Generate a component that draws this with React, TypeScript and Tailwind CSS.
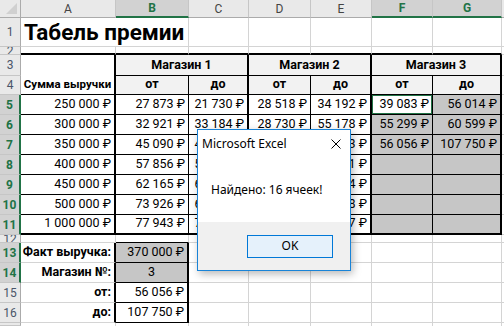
import clsx from "clsx";
import { ReactNode } from "react";

// border styles for a cell edge: g = grid line, k = thin black, K = thick black, n = none
type Edge = "g" | "k" | "K" | "n";

const RIGHT: Record<Edge, string> = {
  g: "border-r border-r-[#d4d4d4]",
  k: "border-r border-r-black",
  K: "border-r-2 border-r-black",
  n: "",
};

const BOTTOM: Record<Edge, string> = {
  g: "border-b border-b-[#d4d4d4]",
  k: "border-b border-b-black",
  K: "border-b-2 border-b-black",
  n: "",
};

type CellProps = {
  children?: ReactNode;
  r?: Edge;
  b?: Edge;
  align?: "left" | "right" | "center";
  className?: string;
};

const Cell = ({ children, r = "g", b = "g", align = "right", className }: CellProps) => (
  <div
    className={clsx(
      "flex items-end overflow-hidden whitespace-nowrap pb-[2px] leading-[16px]",
      RIGHT[r],
      BOTTOM[b],
      align === "right" && "justify-end pr-[3px]",
      align === "center" && "justify-center",
      align === "left" && "justify-start pl-[3px]",
      className
    )}
  >
    {children}
  </div>
);

const ColHead = ({ label, on }: { label?: string; on?: boolean }) => (
  <div
    className={clsx(
      "flex items-center justify-center border-r border-r-[#c6c6c6] text-[12px]",
      on
        ? "bg-[#d2d2d2] border-b-2 border-b-[#217346] font-bold text-[#217346]"
        : "bg-[#e9e9e9] border-b border-b-[#ababab] text-[#444]"
    )}
  >
    {label}
  </div>
);

const RowHead = ({ n, on }: { n?: number; on?: boolean }) => (
  <div
    className={clsx(
      "flex items-center justify-center overflow-hidden border-b border-b-[#c6c6c6] text-[12px] leading-none",
      on
        ? "bg-[#d2d2d2] border-r-2 border-r-[#217346] font-bold text-[#217346]"
        : "bg-[#e9e9e9] border-r border-r-[#ababab] text-[#4a5568]"
    )}
  >
    {n}
  </div>
);

const ROWS = [
  { sum: "250 000 ₽", v: ["27 873 ₽", "21 730 ₽", "28 518 ₽", "34 192 ₽", "39 083 ₽", "56 014 ₽"] },
  { sum: "300 000 ₽", v: ["32 921 ₽", "33 184 ₽", "28 730 ₽", "55 178 ₽", "55 299 ₽", "60 599 ₽"] },
  { sum: "350 000 ₽", v: ["45 090 ₽", "48 211 ₽", "52 417 ₽", "60 553 ₽", "56 056 ₽", "107 750 ₽"] },
  { sum: "400 000 ₽", v: ["57 856 ₽", "59 342 ₽", "61 205 ₽", "63 871 ₽", "", ""] },
  { sum: "450 000 ₽", v: ["62 165 ₽", "66 118 ₽", "68 940 ₽", "70 214 ₽", "", ""] },
  { sum: "500 000 ₽", v: ["73 926 ₽", "69 805 ₽", "74 332 ₽", "81 098 ₽", "", ""] },
  { sum: "1 000 000 ₽", v: ["77 943 ₽", "78 536 ₽", "85 120 ₽", "89 417 ₽", "", ""] },
];

const TOTALS = [
  { label: "Факт выручка:", value: "370 000 ₽", on: true, center: false },
  { label: "Магазин №:", value: "3", on: true, center: true },
  { label: "от:", value: "56 056 ₽", on: false, center: false },
  { label: "до:", value: "107 750 ₽", on: false, center: false },
];

const STORES = ["Магазин 1", "Магазин 2", "Магазин 3"];

export default function App() {
  return (
    <div className="relative h-[326px] w-[504px] overflow-hidden bg-white font-['Roboto',sans-serif] text-[12.5px] text-black">
      <div className="grid h-full grid-cols-[21px_95px_73px_60px_62px_61px_61px_69px_1fr] grid-rows-[18px_29px_8px_21px_19px_repeat(7,20px)_8px_repeat(4,20px)_1fr]">
        {/* column headers */}
        <div className="relative border-b border-r border-b-[#ababab] border-r-[#ababab] bg-[#e9e9e9]">
          <svg className="absolute bottom-[3px] right-[3px]" width="11" height="11" viewBox="0 0 11 11">
            <polygon points="11,0 11,11 0,11" fill="#d0d0d0" />
          </svg>
        </div>
        <ColHead label="A" />
        <ColHead label="B" on />
        <ColHead label="C" />
        <ColHead label="D" />
        <ColHead label="E" />
        <ColHead label="F" on />
        <ColHead label="G" on />
        <ColHead />

        {/* row 1: title */}
        <RowHead n={1} />
        <div className="flex items-end overflow-visible whitespace-nowrap border-b border-b-[#d4d4d4] pb-[1px] pl-[3px] text-[22.5px] font-bold leading-[26px]">
          Табель премии
        </div>
        <Cell />
        <Cell />
        <Cell />
        <Cell />
        <Cell />
        <Cell />
        <Cell r="n" />

        {/* row 2 */}
        <RowHead n={2} />
        <Cell b="K" />
        <Cell b="K" />
        <Cell b="K" />
        <Cell b="K" />
        <Cell b="K" />
        <Cell b="K" />
        <Cell b="K" />
        <Cell r="n" />

        {/* row 3: store captions */}
        <RowHead n={3} />
        <Cell r="K" b="n" />
        {STORES.map((s) => (
          <Cell key={s} r="K" b="k" align="center" className="col-span-2 items-center bg-[#f2f2f2] pb-0 font-bold">
            {s}
          </Cell>
        ))}
        <Cell r="n" />

        {/* row 4: column captions */}
        <RowHead n={4} />
        <Cell r="K" b="k" align="center" className="text-[11.5px] font-bold">
          Сумма выручки
        </Cell>
        {STORES.map((s) => [
          <Cell key={s + "from"} r="k" b="k" align="center" className="bg-[#f2f2f2] font-bold">
            от
          </Cell>,
          <Cell key={s + "to"} r="K" b="k" align="center" className="bg-[#f2f2f2] font-bold">
            до
          </Cell>,
        ])}
        <Cell r="n" />

        {/* rows 5-11: ranges */}
        {ROWS.map((row, i) => {
          const b: Edge = i === ROWS.length - 1 ? "K" : "k";
          return [
            <RowHead key={"h" + i} n={i + 5} on />,
            <Cell key={"a" + i} r="K" b={b}>
              {row.sum}
            </Cell>,
            <Cell key={"b" + i} r="k" b={b}>
              {row.v[0]}
            </Cell>,
            <Cell key={"c" + i} r="K" b={b}>
              {row.v[1]}
            </Cell>,
            <Cell key={"d" + i} r="k" b={b}>
              {row.v[2]}
            </Cell>,
            <Cell key={"e" + i} r="K" b={b}>
              {row.v[3]}
            </Cell>,
            <Cell
              key={"f" + i}
              r="k"
              b={b}
              className={i === 0 ? "shadow-[inset_0_0_0_1px_#217346]" : "bg-[#c6c6c6]"}
            >
              {row.v[4]}
            </Cell>,
            <Cell key={"g" + i} r="K" b={b} className="bg-[#c6c6c6]">
              {row.v[5]}
            </Cell>,
            <Cell key={"x" + i} r="n" />,
          ];
        })}

        {/* row 12 */}
        <RowHead n={12} />
        <Cell />
        <Cell b="k" />
        <Cell />
        <Cell />
        <Cell />
        <Cell />
        <Cell />
        <Cell r="n" />

        {/* rows 13-16: lookup result */}
        {TOTALS.map((t, i) => [
          <RowHead key={"th" + i} n={i + 13} on={t.on} />,
          <Cell key={"ta" + i} r="K" className="font-bold">
            {t.label}
          </Cell>,
          <Cell
            key={"tb" + i}
            r="K"
            b="k"
            align={t.center ? "center" : "right"}
            className={clsx(t.on && "bg-[#c6c6c6]")}
          >
            {t.value}
          </Cell>,
          <Cell key={"tc" + i} />,
          <Cell key={"td" + i} />,
          <Cell key={"te" + i} />,
          <Cell key={"tf" + i} />,
          <Cell key={"tg" + i} />,
          <Cell key={"tx" + i} r="n" />,
        ])}

        {/* next row, only its top edge is on screen */}
        <RowHead />
        <Cell b="n" />
        <Cell b="n" />
        <Cell b="n" />
        <Cell b="n" />
        <Cell b="n" />
        <Cell b="n" />
        <Cell b="n" />
        <Cell r="n" b="n" />
      </div>

      {/* message box */}
      <div className="absolute left-[197px] top-[129px] flex h-[142px] w-[154px] flex-col border border-[#1883d7] bg-white font-['Noto_Sans',sans-serif] shadow-[2px_3px_8px_rgba(0,0,0,0.28)]">
        <div className="flex h-[27px] items-center justify-between pl-[4px] pr-[9px] text-[12px]">
          <span>Microsoft Excel</span>
          <svg width="10" height="10" viewBox="0 0 10 10">
            <path d="M0.5 0.5L9.5 9.5M9.5 0.5L0.5 9.5" stroke="#000" strokeWidth="1" />
          </svg>
        </div>
        <div className="flex flex-1 items-center pl-[13px] text-[12px]">Найдено: 16 ячеек!</div>
        <div className="flex h-[48px] items-center justify-end bg-[#f0f0f0] pr-[17px]">
          <div className="flex h-[23px] w-[86px] items-center justify-center border border-[#0078d7] bg-[#e5f1fb] text-[12px]">
            OK
          </div>
        </div>
      </div>
    </div>
  );
}
